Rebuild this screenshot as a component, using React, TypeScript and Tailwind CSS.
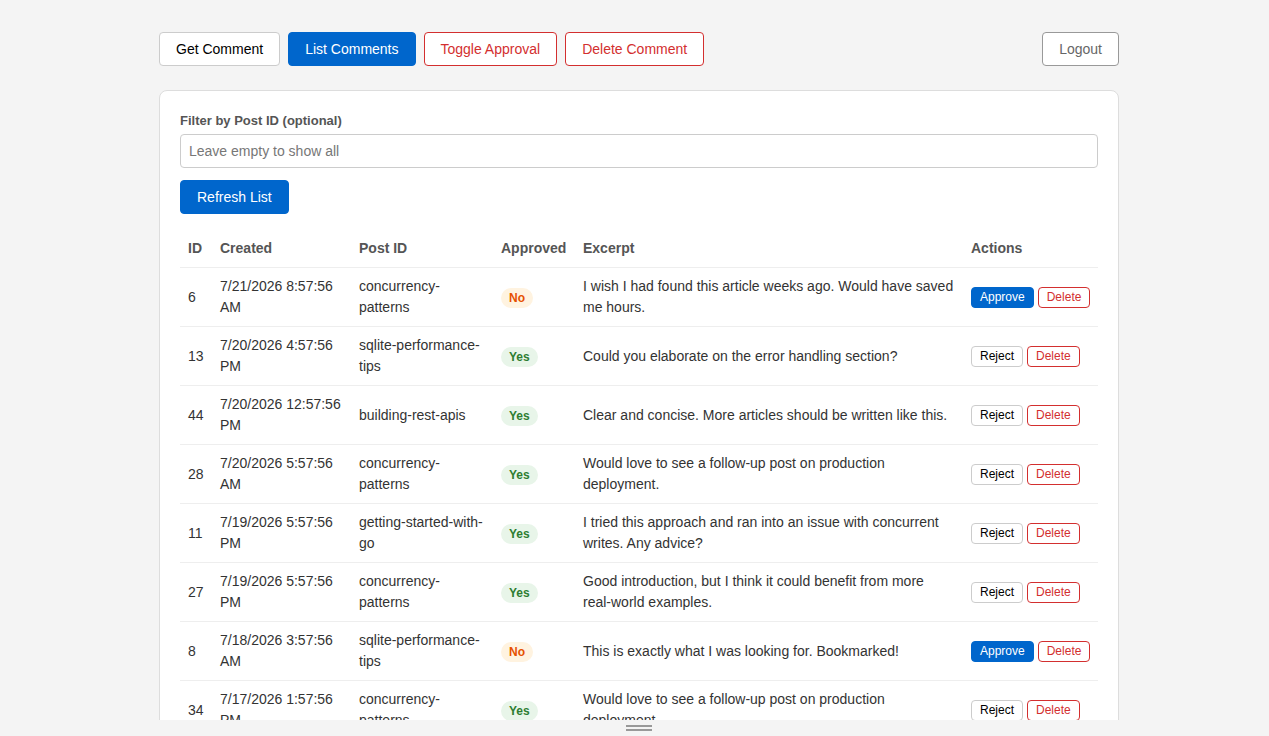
import React from 'react';

type Comment = {
  id: number;
  created: string;
  postId: string;
  approved: boolean;
  excerpt: string;
};

const comments: Comment[] = [
  { id: 6, created: '7/21/2026 8:57:56 AM', postId: 'concurrency-patterns', approved: false, excerpt: 'I wish I had found this article weeks ago. Would have saved me hours.' },
  { id: 13, created: '7/20/2026 4:57:56 PM', postId: 'sqlite-performance-tips', approved: true, excerpt: 'Could you elaborate on the error handling section?' },
  { id: 44, created: '7/20/2026 12:57:56 PM', postId: 'building-rest-apis', approved: true, excerpt: 'Clear and concise. More articles should be written like this.' },
  { id: 28, created: '7/20/2026 5:57:56 AM', postId: 'concurrency-patterns', approved: true, excerpt: 'Would love to see a follow-up post on production deployment.' },
  { id: 11, created: '7/19/2026 5:57:56 PM', postId: 'getting-started-with-go', approved: true, excerpt: 'I tried this approach and ran into an issue with concurrent writes. Any advice?' },
  { id: 27, created: '7/19/2026 5:57:56 PM', postId: 'concurrency-patterns', approved: true, excerpt: 'Good introduction, but I think it could benefit from more real-world examples.' },
  { id: 8, created: '7/18/2026 3:57:56 AM', postId: 'sqlite-performance-tips', approved: false, excerpt: 'This is exactly what I was looking for. Bookmarked!' },
  { id: 34, created: '7/17/2026 1:57:56 PM', postId: 'concurrency-patterns', approved: true, excerpt: 'Would love to see a follow-up post on production deployment.' },
  { id: 19, created: '7/16/2026 9:57:56 AM', postId: 'building-rest-apis', approved: true, excerpt: 'Great write-up, thanks for sharing.' },
];

const App: React.FC = () => {
  return (
    <div className="h-[736px] flex flex-col bg-[#f4f4f4] text-[#333] font-['Liberation_Sans',Arial,sans-serif]">
      {/* Scrollable page */}
      <div className="h-[720px] overflow-hidden">
        <div className="pt-8 pl-[159px]">
          <div className="w-[960px]">
            {/* Toolbar */}
            <div className="flex items-center justify-between">
              <div className="flex gap-2">
                <button className="px-4 py-2 text-sm leading-4 bg-white text-black border border-[#ccc] rounded">Get Comment</button>
                <button className="px-4 py-2 text-sm leading-4 bg-[#0066cc] text-white border border-[#0066cc] rounded">List Comments</button>
                <button className="px-4 py-2 text-sm leading-4 bg-white text-[#d32f2f] border border-[#d32f2f] rounded">Toggle Approval</button>
                <button className="px-4 py-2 text-sm leading-4 bg-white text-[#d32f2f] border border-[#d32f2f] rounded">Delete Comment</button>
              </div>
              <button className="px-4 py-2 text-sm leading-4 bg-white text-[#666] border border-[#999] rounded">Logout</button>
            </div>

            {/* Card */}
            <div className="mt-6 bg-white border border-[#ddd] rounded-lg p-5">
              <label className="block text-[13px] leading-[20px] font-bold text-[#555] mb-[3px]">Filter by Post ID (optional)</label>
              <input
                className="w-full h-[34px] px-2 text-sm border border-[#ccc] rounded placeholder:text-[#777] outline-none"
                placeholder="Leave empty to show all"
              />
              <button className="mt-3 px-4 py-2 text-sm leading-4 bg-[#0066cc] text-white border border-[#0066cc] rounded">Refresh List</button>

              <table className="mt-4 w-full table-fixed border-collapse text-sm leading-[21px]">
                <colgroup>
                  <col className="w-[32px]" />
                  <col className="w-[139px]" />
                  <col className="w-[142px]" />
                  <col className="w-[82px]" />
                  <col className="w-[388px]" />
                  <col className="w-[135px]" />
                </colgroup>
                <thead>
                  <tr className="border-b border-[#eee] text-left text-[#555]">
                    <th className="px-2 py-2 font-bold">ID</th>
                    <th className="px-2 py-2 font-bold">Created</th>
                    <th className="px-2 py-2 font-bold">Post ID</th>
                    <th className="px-2 py-2 font-bold">Approved</th>
                    <th className="px-2 py-2 font-bold">Excerpt</th>
                    <th className="px-2 py-2 font-bold">Actions</th>
                  </tr>
                </thead>
                <tbody>
                  {comments.map((c) => (
                    <tr key={c.id} className="border-b border-[#eee] align-middle">
                      <td className="px-2 py-2">{c.id}</td>
                      <td className="px-2 py-2">{c.created}</td>
                      <td className="px-2 py-2">{c.postId}</td>
                      <td className="px-2 py-2">
                        {c.approved ? (
                          <span className="inline-block px-2 py-[3px] text-xs leading-[14px] font-bold rounded-full bg-[#e8f5e9] text-[#2e7d32]">Yes</span>
                        ) : (
                          <span className="inline-block px-2 py-[3px] text-xs leading-[14px] font-bold rounded-full bg-[#fff3e0] text-[#e65100]">No</span>
                        )}
                      </td>
                      <td className="px-2 py-2">{c.excerpt}</td>
                      <td className="px-2 py-2">
                        <div className="flex gap-1">
                          {c.approved ? (
                            <button className="px-2 py-[2px] text-xs leading-[15px] bg-white text-black border border-[#ccc] rounded">Reject</button>
                          ) : (
                            <button className="px-2 py-[2px] text-xs leading-[15px] bg-[#0066cc] text-white border border-[#0066cc] rounded">Approve</button>
                          )}
                          <button className="px-2 py-[2px] text-xs leading-[15px] bg-white text-[#d32f2f] border border-[#d32f2f] rounded">Delete</button>
                        </div>
                      </td>
                    </tr>
                  ))}
                </tbody>
              </table>
            </div>
          </div>
        </div>
      </div>

      {/* Resize handle */}
      <div className="h-4 pl-[9px] flex flex-col items-center justify-center gap-[2px]">
        <div className="w-[26px] h-[2px] bg-[#999]" />
        <div className="w-[26px] h-[2px] bg-[#999]" />
      </div>
    </div>
  );
};

export default App;
